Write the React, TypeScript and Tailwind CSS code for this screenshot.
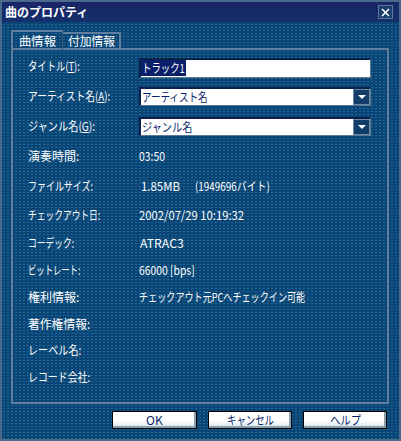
import React, { useLayoutEffect, useRef, useState } from "react";

const font = { fontFamily: '"Noto Sans CJK JP", "Noto Sans", sans-serif' };

function Fit({ w, children, className }: { w: number; children: React.ReactNode; className?: string }) {
  const ref = useRef<HTMLSpanElement>(null);
  const [s, setS] = useState(1);
  useLayoutEffect(() => {
    const m = () => {
      if (ref.current) {
        const n = ref.current.offsetWidth;
        if (n) setS(w / n);
      }
    };
    m();
    if (document.fonts && document.fonts.ready) document.fonts.ready.then(m);
  }, [w]);
  return (
    <span className={"inline-block whitespace-nowrap " + (className ?? "")} style={{ width: w }}>
      <span ref={ref} className="inline-block whitespace-nowrap origin-left" style={{ transform: `scaleX(${s})` }}>
        {children}
      </span>
    </span>
  );
}

function Row({ h, label, lw, children }: { h: number; label: React.ReactNode; lw: number; children?: React.ReactNode }) {
  return (
    <div className="flex items-center" style={{ height: h }}>
      <div className="w-[111px] shrink-0 text-[12px] text-white leading-none">
        <Fit w={lw}>{label}</Fit>
      </div>
      <div className="flex-1 flex items-center text-[12px] text-white leading-none">{children}</div>
    </div>
  );
}

function Select({ value, w }: { value: string; w: number }) {
  return (
    <div className="flex w-[232px] h-[19px] border-t-2 border-l-2 border-[#0a1f4a] border-b border-r border-b-[#5a7896] border-r-[#5a7896] bg-white">
      <div className="flex-1 flex items-center pl-[1px] text-[12px] text-[#0a1f6a] leading-none">
        <Fit w={w}>{value}</Fit>
      </div>
      <div className="w-[17px] h-full bg-[#123d68] border border-[#6b8aa8] flex items-center justify-center">
        <div className="w-0 h-0 border-l-[4px] border-r-[4px] border-t-[4px] border-l-transparent border-r-transparent border-t-white" />
      </div>
    </div>
  );
}

function Btn({ label, w, bw }: { label: string; w: number; bw: number }) {
  return (
    <div
      className="h-[18px] border border-black bg-[linear-gradient(180deg,#ffffff_0%,#ffffff_55%,#cfe0e8_100%)] shadow-[inset_-2px_-2px_0_#8aa2b0] flex items-center justify-center text-[12px] text-[#0a1f6a] leading-none"
      style={{ width: bw }}
    >
      <Fit w={w}>{label}</Fit>
    </div>
  );
}

export default function App() {
  return (
    <div
      className="w-[401px] h-[441px] border-2 border-[#4a6a8c] bg-[#0b4476] bg-[radial-gradient(circle,#1d6b8e_0.6px,transparent_0.9px)] bg-[length:4px_3px] flex flex-col overflow-hidden"
      style={font}
    >
      {/* title bar */}
      <div className="h-[20px] bg-[linear-gradient(180deg,#1a2568_0%,#14306c_100%)] flex items-center justify-between pl-[3px] pr-[6px] shrink-0">
        <span className="text-white text-[12px] font-bold leading-none">
          <Fit w={83}>曲のプロパティ</Fit>
        </span>
        <div className="w-[15px] h-[14px] border border-[#5b7a9a] bg-[#1b3d6e] flex items-center justify-center">
          <svg width="9" height="9" viewBox="0 0 9 9">
            <path d="M1 1 L8 8 M8 1 L1 8" stroke="white" strokeWidth="1.6" />
          </svg>
        </div>
      </div>

      {/* tabs */}
      <div className="flex items-end pl-[9px] pt-[6px] h-[26px] shrink-0">
        <div className="h-[20px] pl-[6px] pr-[6px] border-t-2 border-l-2 border-r border-[#5f7f9f] border-r-[#3a5a7a] flex items-center text-white text-[12px] leading-none relative z-10 -mb-[2px]">
          <Fit w={37}>曲情報</Fit>
        </div>
        <div className="h-[16px] pl-[5px] pr-[4px] border-t-2 border-r-2 border-[#5f7f9f] flex items-center text-white text-[12px] leading-none">
          <Fit w={47}>付加情報</Fit>
        </div>
      </div>

      {/* panel */}
      <div className="ml-[9px] mr-[10px] h-[356px] border-2 border-[#5f7f9f] pl-[15px] pr-[18px] shrink-0">
        <Row h={31} label={<>タイトル(<span className="underline">T</span>):</>} lw={52}>
          <div className="mt-[4px] w-[232px] h-[20px] border-t-2 border-l-2 border-[#0a1f4a] border-b border-r border-b-[#5a7896] border-r-[#5a7896] bg-white flex items-center">
            <span className="bg-[#0a1f6a] text-white text-[12px] leading-none px-[1px] py-[2px]">
              <Fit w={43}>トラック1</Fit>
            </span>
          </div>
        </Row>
        <Row h={30} label={<>アーティスト名(<span className="underline">A</span>):</>} lw={82}>
          <Select value="アーティスト名" w={66} />
        </Row>
        <Row h={30} label={<>ジャンル名(<span className="underline">G</span>):</>} lw={67}>
          <Select value="ジャンル名" w={50} />
        </Row>
        <Row h={30} label="演奏時間:" lw={51}>
          <Fit w={26}>03:50</Fit>
        </Row>
        <Row h={30} label="ファイルサイズ:" lw={65}>
          <span className="ml-[2px]">
            <Fit w={39}>1.85MB</Fit>
          </span>
          <span className="ml-[15px]">
            <Fit w={75}>(1949696バイト)</Fit>
          </span>
        </Row>
        <Row h={28} label="チェックアウト日:" lw={72}>
          <Fit w={105}>2002/07/29 10:19:32</Fit>
        </Row>
        <Row h={27} label="コーデック:" lw={46}>
          <span className="ml-[1px]">
            <Fit w={44}>ATRAC3</Fit>
          </span>
        </Row>
        <Row h={27} label="ビットレート:" lw={52}>
          <Fit w={56}>66000 [bps]</Fit>
        </Row>
        <Row h={27} label="権利情報:" lw={51}>
          <Fit w={166}>チェックアウト元PCへチェックイン可能</Fit>
        </Row>
        <Row h={27} label="著作権情報:" lw={62} />
        <Row h={26} label="レーベル名:" lw={53} />
        <Row h={27} label="レコード会社:" lw={62} />
      </div>

      {/* buttons */}
      <div className="flex justify-end gap-[11px] pr-[12px] pt-[7px]">
        <Btn label="OK" w={17} bw={85} />
        <Btn label="キャンセル" w={47} bw={84} />
        <Btn label="ヘルプ" w={31} bw={84} />
      </div>
    </div>
  );
}
